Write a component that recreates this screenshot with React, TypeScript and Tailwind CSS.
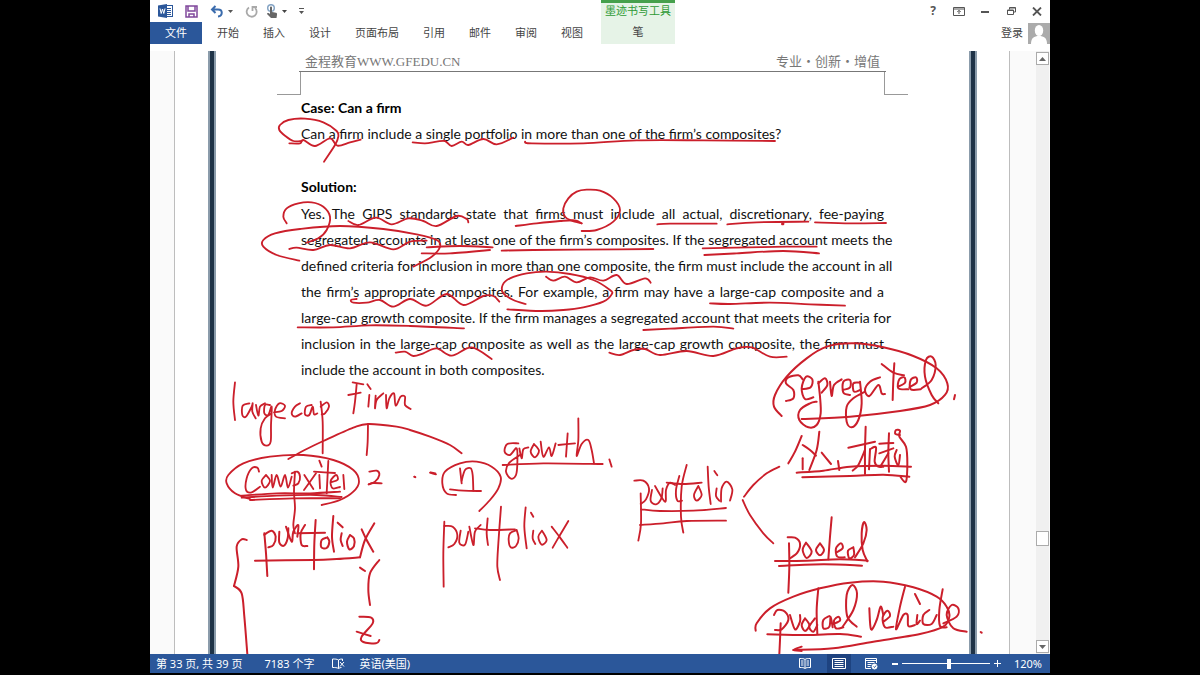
import React from "react";

type Layer = { x: number; y: number; pen: number; strokes: string[] };

const layers: Layer[] = [
  {
    x: 250,
    y: 95,
    pen: 5.5,
    strokes: [
      "155,138 130,138 105,122 88,105 90,90 115,75 165,71 220,82 260,108 265,125 255,150 222,200",
      "118,145 150,145 160,135 195,153 240,130 262,152 300,142 332,134",
      "488,142 525,145 560,140 585,138 605,153 635,140 655,150 700,132 740,148 790,128",
      "825,140 845,145 1000,145 1160,136 1360,136 1575,138",
      "110,385 100,365 110,340 145,325 185,322 220,335 240,365 230,405 205,430 170,443",
      "295,378 325,390 378,368 425,388 475,370 520,378 560,393 620,363 650,372 655,382",
      "797,393 860,385 930,378 975,376 995,385",
      "148,497 80,480 40,455 40,435 75,415 150,402 270,393 400,402 500,418 560,435 570,455 545,485 490,515",
      "118,462 140,458 190,465 240,450 300,460 360,442 430,463 480,440 530,437",
      "515,475 600,475 720,465",
      "530,457 630,453 728,457",
      "755,467 850,465 1110,463 1210,462",
    ],
  },
  {
    x: 570,
    y: 95,
    pen: 5.5,
    strokes: [
      "35,408 80,405 130,380 150,345 130,310 90,287 50,284 20,290 -5,310 -20,340 -15,365 5,377 35,385",
      "262,388 300,386 440,386",
      "472,388 560,382 715,380",
      "735,382 840,385 948,384",
      "636,385 640,385 640,388 636,388",
      "398,460 500,458 650,455 740,455",
      "403,480 500,475 640,468 747,475",
    ],
  },
  {
    x: 250,
    y: 250,
    pen: 5.5,
    strokes: [
      "320,147 303,150 310,158 350,158 390,150 430,170 480,147 530,167 590,132 640,165 700,138 730,138 748,155",
      "827,162 790,150 760,130 758,105 780,85 830,70 890,65 960,72 1030,90 1080,120 1085,133 1060,155 1000,172 940,180 870,183 772,178",
      "888,80 910,92 945,80 980,97 1020,82 1060,92 1100,75 1130,102 1185,85 1202,98",
      "143,232 250,232 360,226 480,228 642,235",
      "437,308 465,305 490,318 520,310 560,295 605,317 665,292 725,327",
    ],
  },
  {
    x: 570,
    y: 250,
    pen: 5.5,
    strokes: [
      "420,160 480,162 600,158 720,163 825,167",
      "220,240 300,236 430,230 490,236",
      "118,308 150,315 190,300 225,297 270,315 350,303 430,318 500,295 545,292 600,320 650,320",
    ],
  },
  {
    x: 210,
    y: 375,
    pen: 5.5,
    strokes: [
      "75,22 70,80 75,135",
      "118,85 98,92 97,120 108,125 125,95 128,85 127,110 137,130",
      "138,90 145,122 150,95 165,85",
      "180,90 165,90 163,115 175,120 185,95 183,150 182,200 170,212 155,200 152,160 165,130 185,115",
      "192,112 215,108 225,92 208,85 195,105 198,125 225,130",
      "270,85 255,95 245,115 255,125 275,115",
      "305,90 288,95 285,118 298,120 308,95 312,118 322,115",
      "332,80 338,140 338,235",
      "332,95 350,82 357,95 345,115 335,118",
      "428,22 460,28",
      "440,28 435,80 430,115",
      "415,60 452,53",
      "478,60 475,95",
      "472,28 482,42",
      "497,62 495,100 500,75 520,55",
      "528,60 530,100 538,70 552,55 557,92 572,65 585,65 585,90 602,102",
      "235,252 290,222 340,198 430,158 475,147 560,155 600,165 660,185 720,210 755,235",
      "474,147 473,200 470,240",
      "335,390 390,375 430,350 447,320 430,285 370,255 280,240 180,245 100,265 55,300 50,325 75,355 120,372",
      "147,290 142,278 125,280 110,310 108,345 125,352 150,335",
      "168,300 155,318 165,338 180,318 168,300",
      "185,300 188,338 200,300 212,335 225,300 234,338 245,305",
      "255,290 252,350 255,400 250,450 255,475",
      "245,295 262,290 270,305 265,325 250,332",
      "283,300 310,342",
      "318,295 282,345",
      "328,257 335,275",
      "328,300 330,340",
      "355,258 350,355",
      "312,290 375,294",
      "362,322 383,314 378,300 362,318 368,340 390,336",
      "400,300 403,342",
      "95,362 200,355 300,355 390,350",
      "95,368 200,362 320,360 395,366",
      "120,375 250,370 390,370",
      "478,290 500,287 508,300 495,320 476,328",
      "476,328 490,324 515,325",
      "613,305 616,307",
      "660,293 678,298",
    ],
  },
  {
    x: 210,
    y: 510,
    pen: 6,
    strokes: [
      "163,70 168,130 172,198",
      "163,74 185,62 197,80 190,105 175,112",
      "208,65 208,98 222,107 233,85 235,55",
      "228,50 245,95 250,65 265,45 262,80",
      "285,45 272,70 275,105 292,108",
      "317,30 313,100 312,178",
      "262,70 345,68",
      "352,82 335,90 334,112 350,114 358,95 352,82",
      "370,18 366,80 372,125",
      "395,70 392,90 398,108",
      "383,38 398,52",
      "420,75 411,95 418,118 432,108 432,85 420,75",
      "455,58 470,90 490,125",
      "493,40 465,90 450,142",
      "450,142 380,147 310,150 135,152",
      "450,173 465,183",
      "508,150 480,190 475,240 480,285",
      "448,320 482,322 488,340 455,380 460,396 498,400 508,390",
      "440,365 482,378",
      "110,90 95,88 80,110 85,170 72,228",
      "72,228 95,250 103,320 112,432",
    ],
  },
  {
    x: 410,
    y: 420,
    pen: 5.5,
    strokes: [
      "138,225 110,220 97,190 105,155 150,130 200,125 245,140 272,170 265,205 240,240 208,273",
      "150,145 155,190",
      "155,182 165,150 182,145 188,165 190,212",
      "120,208 160,212 213,213",
      "13,170 16,171",
      "62,157 76,160",
      "325,70 292,72 284,95 300,105 320,85 322,130 318,165 303,176 288,155 298,128 330,105",
      "328,85 335,115 340,88 355,82",
      "372,72 362,95 375,112 387,92 372,72",
      "392,65 400,110 417,82 425,108 437,70",
      "473,40 468,110",
      "445,75 495,70",
      "505,-5 505,60 500,108 515,72 535,60 545,90 552,130",
      "278,135 400,130 578,132",
      "598,118 605,140",
      "103,305 100,400 101,500",
      "103,318 128,320 142,345 133,372 115,382",
      "152,332 148,368 165,374 175,335",
      "178,320 190,375 195,335 212,315",
      "233,295 230,340 234,375",
      "273,260 265,370 262,440 270,480",
      "195,325 240,330 315,328",
      "320,330 300,340 296,360 302,382 318,378 326,355 320,330",
      "347,262 343,320 350,385",
      "370,332 368,355 376,372",
      "363,278 370,290",
      "396,332 385,350 395,374 410,360 396,332",
      "425,320 448,350 472,383",
      "475,303 450,345 428,383",
    ],
  },
  {
    x: 620,
    y: 440,
    pen: 5.5,
    strokes: [
      "62,160 63,250 55,302",
      "43,122 70,122 87,145 78,178 62,192",
      "96,150 92,182 108,193 124,175 128,145",
      "105,138 135,185 138,150 150,128 165,135",
      "178,108 168,150 172,182 186,182",
      "200,75 185,140 183,230 190,278",
      "140,128 190,132 245,128",
      "235,138 222,165 230,182 245,165 235,138",
      "263,80 266,140 272,192",
      "290,145 288,168 298,182",
      "283,93 292,106",
      "303,185 305,145 320,125 337,148 330,182",
      "63,208 120,213 220,212 318,204",
      "60,255 130,250 200,243 318,242",
      "372,170 400,135 440,100 478,80",
      "368,180 390,225 430,280 460,310",
    ],
  },
  {
    x: 750,
    y: 340,
    pen: 6,
    strokes: [
      "95,228 72,200 75,165 110,110 170,55 230,20 310,10 400,22 490,48 560,85 592,130 585,165 540,195 450,213 300,230 155,237",
      "158,118 145,106 115,112 108,130 130,150 130,175 108,183",
      "155,148 182,142 187,118 168,110 155,145 165,177 190,172",
      "205,125 210,170 212,220 200,255 175,262 148,240 150,210 180,190 200,185",
      "205,130 225,115 232,135 215,158",
      "240,125 245,168 252,135 275,118",
      "278,150 300,142 300,120 280,125 280,158 300,165",
      "330,125 335,190 325,240 305,262 290,245 290,200 310,175 345,155",
      "330,128 310,130 312,155 330,150",
      "390,112 360,125 345,150 358,168 385,135 395,160 405,162",
      "395,72 430,98 462,106",
      "433,70 430,120 428,180",
      "445,140 465,128 463,112 448,118 445,145 475,148",
      "478,142 500,128 498,112 482,120 482,148 512,148",
      "515,145 545,120 557,75 545,50 528,60 525,110 545,165 565,190",
      "615,165 612,178",
      "155,288 135,335 115,370",
      "158,355 158,388",
      "208,275 200,330 178,390",
      "158,315 180,330 198,347",
      "215,338 243,372",
      "264,363 268,390",
      "295,323 375,305",
      "347,260 345,330 345,402",
      "345,330 325,375 308,392",
      "357,388 360,328",
      "360,328 378,322 374,365 385,380 400,380",
      "388,340 430,325",
      "417,280 415,340 417,395",
      "415,340 392,378",
      "388,311 430,309",
      "450,285 436,282 438,270 450,272 448,290 468,320 472,370 468,425 452,412",
      "440,330 434,350 445,376 450,345",
      "140,398 220,392 300,380 400,377 483,380",
      "157,412 300,408 400,404 478,410",
    ],
  },
  {
    x: 740,
    y: 500,
    pen: 6,
    strokes: [
      "147,130 148,200 145,278",
      "143,112 165,113 180,130 172,158 150,175",
      "198,128 188,150 200,174 215,155 198,128",
      "240,130 228,150 240,166 252,150 240,130",
      "275,52 270,110 265,178",
      "288,158 308,145 303,130 288,145 292,170 314,172",
      "340,142 324,152 328,175 342,165 340,142",
      "345,172 370,130 380,90 372,66 365,100 368,150 382,184",
      "105,183 200,182 300,178 383,182",
      "117,198 250,193 366,197",
      "47,392 50,370 90,325 160,290 240,265 330,248 430,245 520,262 590,290 620,320 628,350 610,380 540,402 400,425 280,445 160,450",
      "185,440 160,450 185,453",
      "122,370 120,420 118,462",
      "102,345 112,330 135,335 145,360 125,388 105,390",
      "150,345 165,388 180,365 180,345",
      "195,355 185,375 195,393 208,375 195,355",
      "235,265 230,330 232,402",
      "225,355 208,380 220,395 232,375",
      "268,348 250,360 250,385 268,380 272,350 278,382",
      "280,372 300,362 295,350 282,362 288,385 310,382",
      "308,380 340,330 351,280 337,255 320,285 322,350 350,380",
      "388,325 393,388 410,360 422,320 430,345",
      "430,365 450,348 442,332 428,352 435,382 460,380",
      "495,260 480,320 468,388 490,345 503,345 505,378 525,375",
      "525,282 540,312",
      "532,345 530,372 540,362",
      "568,330 550,345 550,372 575,372 590,345",
      "608,268 598,330 600,378 620,382",
      "610,370 650,350 655,325 635,315 620,345 640,385 680,395",
      "722,396 725,398",
      "82,403 200,405 300,402 363,410",
    ],
  },
];

/* Turns sampled points into a smooth curve that passes through all of them. */
function smooth(points: string): string {
  const p = points.split(" ").map((s) => s.split(",").map(Number));
  let d = `M${p[0][0]} ${p[0][1]}`;
  for (let i = 0; i < p.length - 1; i++) {
    const a = p[i - 1] ?? p[i];
    const b = p[i];
    const c = p[i + 1];
    const e = p[i + 2] ?? c;
    d += `C${b[0] + (c[0] - a[0]) / 6} ${b[1] + (c[1] - a[1]) / 6} ${c[0] - (e[0] - b[0]) / 6} ${c[1] - (e[1] - b[1]) / 6} ${c[0]} ${c[1]}`;
  }
  return d;
}

function Ink() {
  return (
    <svg
      aria-hidden="true"
      viewBox="150 51 900 603"
      preserveAspectRatio="xMinYMin meet"
      className="pointer-events-none absolute inset-0 h-full w-full"
      fill="none"
      stroke="#cb1f2b"
      strokeLinecap="round"
      strokeLinejoin="round"
    >
      {layers.map((l, i) => (
        <g key={i} strokeWidth={l.pen} transform={`translate(${l.x} ${l.y}) scale(0.33333)`}>
          {l.strokes.map((s, j) => (
            <path key={j} d={smooth(s)} />
          ))}
        </g>
      ))}
    </svg>
  );
}

const iconButton = "flex items-center justify-center";
const windowButton = "flex h-full w-[26px] items-center justify-center";

function TitleBar() {
  return (
    <div className="flex h-[22px] items-center justify-between pl-2">
      <div className="flex items-center">
        <svg width="15" height="14" viewBox="0 0 15 14" role="img" aria-label="Word">
          <rect x="7" y="1.5" width="7.5" height="11" fill="#fff" stroke="#2b579a" />
          <path d="M9 4.5h4M9 6.5h4M9 8.5h4M9 10.500h4" stroke="#2b579a" />
          <path d="M0 1.500 9 0v14l-9-1.500z" fill="#2b579a" />
          <path d="m2 4.500 1.200 5 1.300-4.500 1.300 4.500 1.200-5" fill="none" stroke="#fff" />
        </svg>
        <button aria-label="保存" className={`${iconButton} ml-3`}>
          <svg width="13" height="13" viewBox="0 0 13 13" fill="none" stroke="#80489c" strokeWidth="1.500">
            <path d="M1 1h11v11H1zM3 1v5h7V1M4 12V9h5v3" />
          </svg>
        </button>
        <button aria-label="撤消" className={`${iconButton} ml-3 gap-1`}>
          <svg width="14" height="13" viewBox="0 0 14 13" fill="none" stroke="#3b6cad" strokeWidth="2">
            <path d="M5.500 1 2 4.500 5.500 8M2.500 4.500H8c5 0 5 6.500 0 7" />
          </svg>
          <svg width="5" height="3" viewBox="0 0 5 3"><path d="M0 0h5L2.500 3z" fill="#555" /></svg>
        </button>
        <button aria-label="恢复" className={`${iconButton} ml-3`}>
          <svg width="13" height="13" viewBox="0 0 13 13" fill="none" stroke="#a9a9a9" strokeWidth="1.800">
            <path d="M4 2.500a5 5 0 1 0 6 .5M7.500 6V2h4.500" />
          </svg>
        </button>
        <button aria-label="触摸模式" className={`${iconButton} ml-2 gap-1`}>
          <svg width="12" height="14" viewBox="0 0 12 14">
            <circle cx="5" cy="4" r="3.300" fill="none" stroke="#86a5c5" strokeWidth="1.500" />
            <path d="M4 3.500c0-1.300 2-1.300 2 0V8l4 .8c1 .2 1.200 1 1 2L10.500 14H5L1 10c0-1 1-1.500 2-.7l1 .7z" fill="#666" />
          </svg>
          <svg width="5" height="3" viewBox="0 0 5 3"><path d="M0 0h5L2.500 3z" fill="#444" /></svg>
        </button>
        <button aria-label="自定义快速访问工具栏" className={`${iconButton} ml-3`}>
          <svg width="5" height="6" viewBox="0 0 5 6"><path d="M0 0h5v1H0zM0 3h5L2.500 6z" fill="#555" /></svg>
        </button>
      </div>
      <div className="flex h-full items-center text-[#555]">
        <button aria-label="帮助" className={`${windowButton} text-xs font-bold`}>?</button>
        <button aria-label="功能区显示选项" className={windowButton}>
          <svg width="12" height="9" viewBox="0 0 12 9" fill="none" stroke="currentColor">
            <path d="M.5.500h11v8H.5zM1 2h10M6 7V3.500M4.300 5 6 3.300 7.700 5" />
          </svg>
        </button>
        <button aria-label="最小化" className={windowButton}>
          <svg width="8" height="9" viewBox="0 0 8 9"><path d="M0 4h8v2H0z" fill="currentColor" /></svg>
        </button>
        <button aria-label="向下还原" className={windowButton}>
          <svg width="9" height="8" viewBox="0 0 9 8" fill="none" stroke="currentColor">
            <path d="M.5 3h6v4.500h-6zM.5 3.500h6M2.500 2.500V.5h6V5h-2M2.500 1h6" />
          </svg>
        </button>
        <button aria-label="关闭" className={windowButton}>
          <svg width="10" height="9" viewBox="0 0 10 9" stroke="currentColor" strokeWidth="1.800">
            <path d="m1 .5 8 8M9 .5l-8 8" />
          </svg>
        </button>
      </div>
    </div>
  );
}

const tabs = ["开始", "插入", "设计", "页面布局", "引用", "邮件", "审阅", "视图"];

function Ribbon() {
  return (
    <header className="relative shrink-0 bg-white pb-[7px]">
      <TitleBar />
      <nav className="flex h-[22px] items-center text-[11px] text-[#444]">
        <button className="h-full w-[52px] bg-[#2b579a] text-white">文件</button>
        <div className="ml-[15px] flex gap-6">
          {tabs.map((t) => (
            <button key={t}>{t}</button>
          ))}
        </div>
        <div className="ml-auto flex items-center gap-[5px]">
          <button>登录</button>
          <svg width="22" height="21" viewBox="0 0 22 21" role="img" aria-label="帐户">
            <path fill="#ababab" d="M0 0h22v21H0z" />
            <ellipse cx="11" cy="7.500" rx="4.200" ry="5.500" fill="#fff" />
            <path d="M3 21c0-6 3-8 8-8s8 2 8 8z" fill="#fff" />
          </svg>
        </div>
      </nav>
      <div className="absolute left-[451px] top-0 flex h-11 w-[74px] flex-col items-center border-t-[3px] border-[#46a04c] bg-[#e6f3e7] text-[11px]">
        <span className="leading-4 text-[#2e9a35]">墨迹书写工具</span>
        <button className="mt-[3px] leading-5 text-[#444]">笔</button>
      </div>
    </header>
  );
}

const solution = [
  "Yes. The GIPS standards state that firms must include all actual, discretionary, fee-paying",
  "segregated accounts in at least one of the firm’s composites. If the segregated account meets the",
  "defined criteria for inclusion in more than one composite, the firm must include the account in all",
  "the firm’s appropriate composites. For example, a firm may have a large-cap composite and a",
  "large-cap growth composite. If the firm manages a segregated account that meets the criteria for",
  "inclusion in the large-cap composite as well as the large-cap growth composite, the firm must",
];

function PageEdge() {
  return <div className="w-2 shrink-0 border-x-2 border-[#8b9cab] bg-[#1f3347]" />;
}

function Page() {
  return (
    <div className="flex min-w-0 flex-1 border-x border-[#bdbdbd] bg-white pl-[33px] pr-8">
      <PageEdge />
      <article className="min-w-0 flex-1 px-[61px]">
        <div className="flex h-[21px] items-center justify-between whitespace-nowrap border-b border-[#777] pl-7 pr-7 pt-[2px] text-[#777] [border-image:linear-gradient(to_right,transparent_23px,#777_23px,#777_calc(100%_-_23px),transparent_calc(100%_-_23px))_1]">
          <span className="font-['Liberation_Serif','Noto_Sans_CJK_SC',serif] text-[13px]">金程教育WWW.GFEDU.CN</span>
          <span className="text-[13px]">专业・创新・增值</span>
        </div>
        <div className="flex h-[23px] justify-between">
          <div className="w-6 border-b border-r border-[#999]" />
          <div className="w-6 border-b border-l border-[#999]" />
        </div>
        <div className="px-6 font-[Lato,sans-serif] text-[14px] leading-[26px] text-[#111]">
          <h1 className="font-bold text-black">Case: Can a firm</h1>
          <p>Can a firm include a single portfolio in more than one of the firm’s composites?</p>
          <h2 className="mb-px mt-[27px] font-bold text-black">Solution:</h2>
          <p>
            {solution.map((line) => (
              <span key={line} className="block whitespace-nowrap [text-align-last:justify]">{line}</span>
            ))}
            <span className="block">include the account in both composites.</span>
          </p>
        </div>
      </article>
      <PageEdge />
    </div>
  );
}

function ScrollBar() {
  return (
    <div className="mr-px flex w-[13px] shrink-0 flex-col items-stretch bg-[#f0f0f0] pt-px">
      <button aria-label="向上滚动" className="flex h-[13px] items-center justify-center border border-[#ababab] bg-white">
        <svg width="7" height="4" viewBox="0 0 7 4"><path d="M0 4h7L3.500 0z" fill="#666" /></svg>
      </button>
      <div className="grow-[466]" />
      <div className="h-[15px] border border-[#ababab] bg-white" />
      <div className="grow-[94]" />
      <button aria-label="向下滚动" className="mb-px flex h-[13px] items-center justify-center border border-[#ababab] bg-white">
        <svg width="7" height="4" viewBox="0 0 7 4"><path d="M0 0h7L3.500 4z" fill="#666" /></svg>
      </button>
    </div>
  );
}

function StatusBar() {
  return (
    <footer className="flex h-[19px] shrink-0 items-center bg-[#2b579a] pl-[6px] pr-2 text-[11px] leading-none text-white">
      <span>第 33 页, 共 39 页</span>
      <span className="ml-[22px]">7183 个字</span>
      <button aria-label="校对" className="ml-[18px]">
        <svg width="13" height="11" viewBox="0 0 13 11" fill="none" stroke="#fff">
          <path d="M6.500 2v8.500M6.500 2C5 1 3 1 .5 1v8.500c2.500 0 4.500 0 6 1 1-.7 2-1 3-1M6.500 2C7.500 1.200 9 1 10.500 1v2M8 4l4 4.500M12 4 8 8.500" />
        </svg>
      </button>
      <span className="ml-[14px]">英语(美国)</span>
      <div className="ml-auto flex h-full items-center">
        <button aria-label="阅读视图" className="flex h-full w-6 items-center justify-center">
          <svg width="12" height="11" viewBox="0 0 12 11" fill="none" stroke="#fff">
            <path d="M6 1.500v9M6 1.500C5 .5 3 .5.500.5v9c2.500 0 4.500 0 5.500 1 1-1 3-1 5.500-1v-9C9 .5 7 .5 6 1.500M2 3h2.500M2 5h2.500M2 7h2.500M7.500 3H10M7.500 5H10M7.500 7H10" />
          </svg>
        </button>
        <button aria-label="页面视图" className="ml-[10px] flex h-full w-6 items-center justify-center bg-[#1e4380]">
          <svg width="14" height="11" viewBox="0 0 14 11" fill="none" stroke="#fff">
            <path d="M.5.500h13v10H.5zM2.500 2.500h9M2.500 4.500h9M2.500 6.500h9M2.500 8.500h9" />
          </svg>
        </button>
        <button aria-label="Web 版式视图" className="ml-[9px] mr-[5px] flex h-full w-6 items-center justify-center">
          <svg width="13" height="12" viewBox="0 0 13 12" fill="none" stroke="#fff">
            <path d="M6 10.500H.5v-10h11V5M.5 2.500h11M2.500 4.500h7M2.500 6.500h4M2.500 8.500h3" />
            <circle cx="9.500" cy="8.500" r="2.500" fill="#fff" />
            <path d="m8.500 8.500 1 1 1.500-2" stroke="#2b579a" />
          </svg>
        </button>
        <button aria-label="缩小" className="flex h-full w-3 items-center justify-center">
          <svg width="6" height="6" viewBox="0 0 6 6"><path d="M0 2h6v2H0z" fill="#fff" /></svg>
        </button>
        <input
          type="range"
          aria-label="显示比例"
          min={0}
          max={100}
          defaultValue={54}
          className="ml-px h-[10px] w-[88px] appearance-none bg-[linear-gradient(#fff,#fff)] bg-[length:100%_1px] bg-center bg-no-repeat [&::-webkit-slider-thumb]:h-[10px] [&::-webkit-slider-thumb]:w-1 [&::-webkit-slider-thumb]:appearance-none [&::-webkit-slider-thumb]:bg-white"
        />
        <button aria-label="放大" className="ml-[3px] flex h-full w-[10px] items-center justify-center">
          <svg width="7" height="7" viewBox="0 0 7 7"><path d="M0 3h3V0h1v3h3v1H4v3H3V4H0z" fill="#fff" /></svg>
        </button>
        <span className="ml-[11px]">120%</span>
      </div>
    </footer>
  );
}

export default function App() {
  return (
    <div className="flex min-h-screen justify-center bg-black font-['Noto_Sans','Noto_Sans_CJK_SC',sans-serif]">
      <div className="flex w-3/4 flex-col overflow-hidden pb-[2px]">
        <Ribbon />
        <main className="relative flex flex-1 bg-[#fafafa]">
          <div className="w-6 shrink-0" />
          <Page />
          <div className="w-[26px] shrink-0" />
          <ScrollBar />
          <Ink />
        </main>
        <StatusBar />
      </div>
    </div>
  );
}
